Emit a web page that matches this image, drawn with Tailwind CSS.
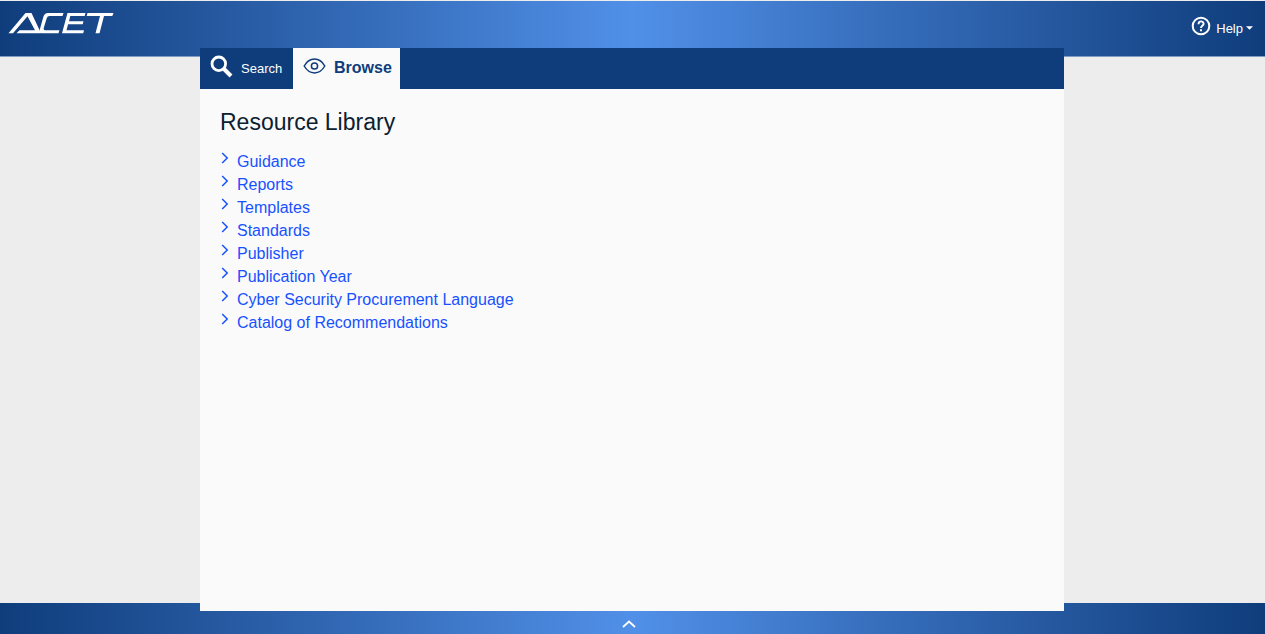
<!DOCTYPE html>
<html lang="en">
<head>
<meta charset="utf-8">
<meta name="viewport" content="width=device-width, initial-scale=1">
<title>ACET - Resource Library</title>
<script src="https://cdn.jsdelivr.net/npm/@tailwindcss/browser@4"></script>
</head>
<body class="flex min-h-screen flex-col bg-[#ededed] font-['Liberation_Sans',Arial,sans-serif]">
<header class="mt-px flex h-14 shrink-0 items-start justify-between border-b border-[#7f9cc9] bg-linear-to-r from-[#0f3d7c] via-[#5190e8] to-[#0f3d7c] pr-3 pl-2">
  <a href="#" aria-label="ACET" class="mt-[11px]">
    <svg class="h-[22px] w-[106px]" viewBox="0 0 106 22" fill="#fff">
      <path fill-rule="evenodd" d="M0.500 21.200 17.500 1H23.500L33 21.200H8.500L11.500 18.200H27L19.500 4.300 5 21.200Z"/>
      <path d="M55.500 1 54.500 4H41.500Q39.500 4 38.800 6L35.800 15.800Q35.200 18.200 37.200 18.200H51.500L50.500 21.200H34Q30.800 21.200 31.800 17.500L35.300 5Q36.500 1 40 1Z"/>
      <path d="M59.500 1H77.500L76.700 4H62.300L61 9.200H75.500L74.700 12.200H60.100L58.500 18.200H76L75.200 21.200H54Z"/>
      <path d="M79.500 1H105.500L104.300 4H96L91.500 21.200H87.500L92 4H78.700Z"/>
    </svg>
  </a>
  <button type="button" class="mt-[15px] flex items-start text-[13px] leading-5 text-white">
    <svg class="mr-[5px] size-5" viewBox="0 0 20 20" fill="none" stroke="#fff"><circle cx="10" cy="10" r="8.300" stroke-width="2"/><path d="M7.500 8.200C7.500 4.300 12.600 4.600 12.600 7.800C12.600 9.900 10 9.800 10 12" stroke-width="1.900"/><path d="M10 13.300v1.900" stroke-width="2"/></svg>
    <span class="mt-[3px]">Help</span>
    <svg class="mt-2.5 ml-[3px] h-1 w-[7px]" viewBox="0 0 8 4" fill="#fff"><path d="M0 0h8L4 4z"/></svg>
  </button>
</header>

<main class="relative mt-[-9px] mr-[201px] -mb-2 ml-[200px] flex grow flex-col bg-[#fafafa]">
  <nav class="flex h-[41px] items-stretch bg-[#0f3d7c]">
    <button type="button" class="flex w-[93px] items-start pt-[7px] pl-2.5 text-[13px] leading-5 text-white">
      <svg class="mr-2 size-[23px]" viewBox="0 0 23 23" fill="none" stroke="#fff"><circle cx="8.800" cy="8.800" r="6.800" stroke-width="2.800"/><path d="m14 14 7 7" stroke-width="4"/></svg>
      <span class="mt-1">Search</span>
    </button>
    <button type="button" class="flex w-[107px] items-start bg-[#fafafa] pt-2.5 pl-2.5 text-base leading-5 font-bold text-[#0f3d7c]">
      <svg class="mr-2 h-4 w-[23px]" viewBox="0 0 23 16" fill="none" stroke="#0f3d7c" stroke-width="1.500"><path d="M1.200 8C6.500-1.200 16.500-1.200 21.800 8C16.500 17.200 6.500 17.200 1.200 8Z"/><circle cx="11.500" cy="8" r="3.100"/></svg>
      <span>Browse</span>
    </button>
  </nav>
  <section class="px-5 pt-[17px] pb-8">
    <h1 class="text-[23px] leading-8 text-[#0b2030]">Resource Library</h1>
    <ul class="mt-3 text-base leading-[23px] text-[#1751ff]">
      <li><a href="#" class="flex items-start gap-2"><svg class="mt-0.5 ml-px h-3 w-2" viewBox="0 0 8 12" fill="none" stroke="currentColor" stroke-width="1.500"><path d="m1.200 1 5 5-5 5"/></svg>Guidance</a></li>
      <li><a href="#" class="flex items-start gap-2"><svg class="mt-0.5 ml-px h-3 w-2" viewBox="0 0 8 12" fill="none" stroke="currentColor" stroke-width="1.500"><path d="m1.200 1 5 5-5 5"/></svg>Reports</a></li>
      <li><a href="#" class="flex items-start gap-2"><svg class="mt-0.5 ml-px h-3 w-2" viewBox="0 0 8 12" fill="none" stroke="currentColor" stroke-width="1.500"><path d="m1.200 1 5 5-5 5"/></svg>Templates</a></li>
      <li><a href="#" class="flex items-start gap-2"><svg class="mt-0.5 ml-px h-3 w-2" viewBox="0 0 8 12" fill="none" stroke="currentColor" stroke-width="1.500"><path d="m1.200 1 5 5-5 5"/></svg>Standards</a></li>
      <li><a href="#" class="flex items-start gap-2"><svg class="mt-0.5 ml-px h-3 w-2" viewBox="0 0 8 12" fill="none" stroke="currentColor" stroke-width="1.500"><path d="m1.200 1 5 5-5 5"/></svg>Publisher</a></li>
      <li><a href="#" class="flex items-start gap-2"><svg class="mt-0.5 ml-px h-3 w-2" viewBox="0 0 8 12" fill="none" stroke="currentColor" stroke-width="1.500"><path d="m1.200 1 5 5-5 5"/></svg>Publication Year</a></li>
      <li><a href="#" class="flex items-start gap-2"><svg class="mt-0.5 ml-px h-3 w-2" viewBox="0 0 8 12" fill="none" stroke="currentColor" stroke-width="1.500"><path d="m1.200 1 5 5-5 5"/></svg>Cyber Security Procurement Language</a></li>
      <li><a href="#" class="flex items-start gap-2"><svg class="mt-0.5 ml-px h-3 w-2" viewBox="0 0 8 12" fill="none" stroke="currentColor" stroke-width="1.500"><path d="m1.200 1 5 5-5 5"/></svg>Catalog of Recommendations</a></li>
    </ul>
  </section>
</main>

<footer class="flex h-[31px] shrink-0 justify-center bg-linear-to-r from-[#0f3d7c] via-[#5190e8] to-[#0f3d7c] pr-2">
  <button type="button" aria-label="Expand footer" class="mt-[17px] h-2 w-3.5">
    <svg class="h-2 w-3.5" viewBox="0 0 14 8" fill="none" stroke="#fff" stroke-width="1.800"><path d="m1 7 6-5.500L13 7"/></svg>
  </button>
</footer>
</body>
</html>
